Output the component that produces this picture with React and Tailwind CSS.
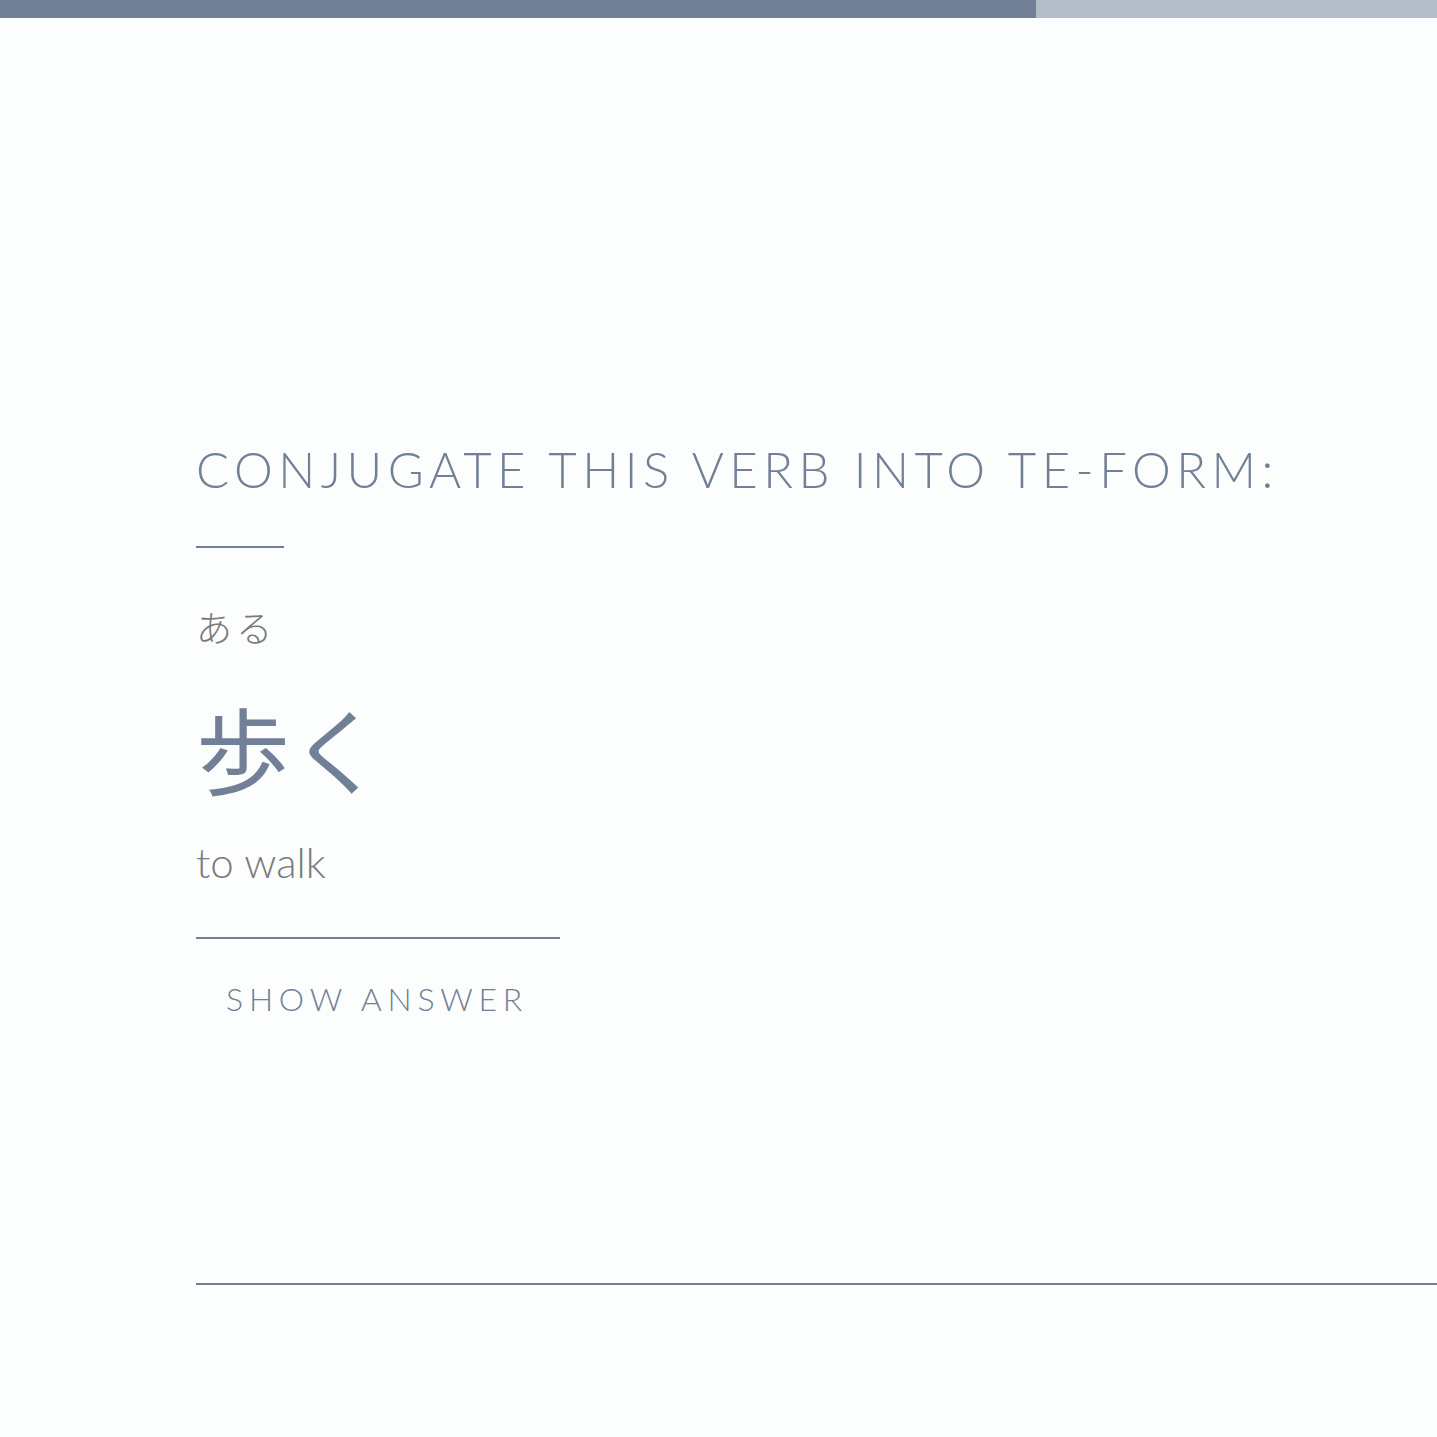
export default function App() {
    return (
        <div className="min-h-[1437px] bg-[#fcfdfd] font-['Lato','Noto_Sans_CJK_JP',sans-serif] text-[#718096]">
            {/* progress */}
            <div className="flex h-[18px]">
                <div className="w-[1036px] bg-[#718096]" />
                <div className="flex-1 bg-[#b4becb]" />
            </div>

            <main className="pl-[196px] pt-[427px]">
                <h1 className="text-[49px] font-light leading-none tracking-[0.112em] uppercase">
                    Conjugate this verb into te-form:
                </h1>
                <div className="mt-[52px] h-[2px] w-[88px] bg-[#718096]" />

                <p className="mt-[60px] text-[36px] font-light leading-none tracking-[0.12em] text-[#7a7a7a] font-['Noto_Sans_CJK_JP',sans-serif]">
                    ある
                </p>
                <p className="mt-[56px] text-[94px] leading-none font-['Noto_Sans_CJK_JP',sans-serif]">
                    歩く
                </p>
                <p className="mt-[47px] text-[42px] font-light leading-none text-[#7a7a7a]">
                    to walk
                </p>
                <div className="mt-[54px] h-[2px] w-[364px] bg-[#718096]" />

                <button className="mt-[44px] px-[30px] text-[32px] font-light leading-none tracking-[0.18em] uppercase text-[#718096]">
                    Show answer
                </button>

                <div className="mt-[266px] h-[2px] bg-[#718096]" />
            </main>
        </div>
    );
}
